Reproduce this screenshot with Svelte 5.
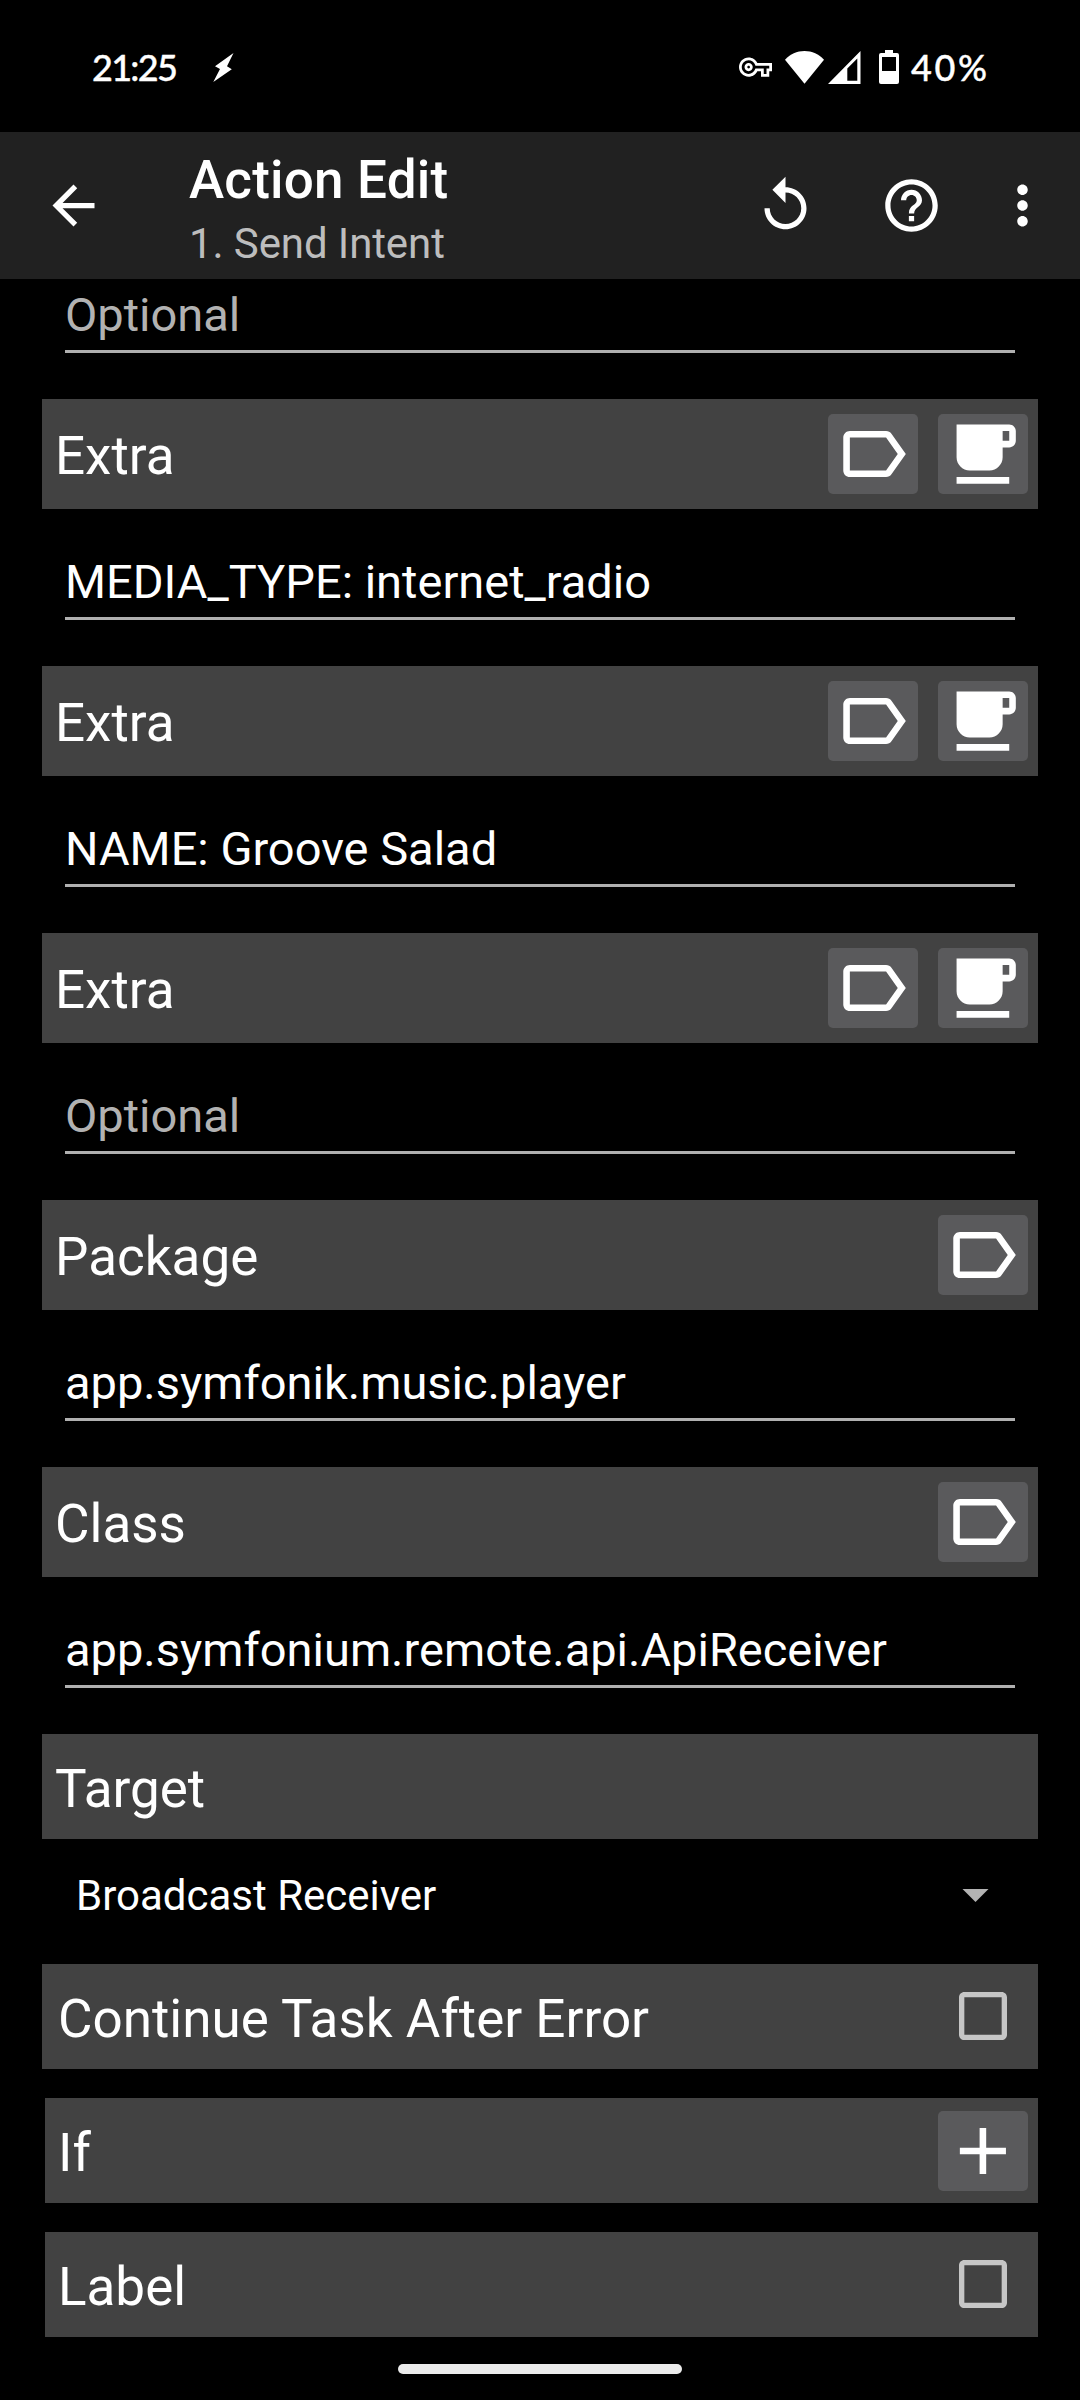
<script lang="ts">
	type Field = { label: string; value: string; coffee?: boolean };

	const fields: Field[] = [
		{ label: 'Extra', value: 'MEDIA_TYPE: internet_radio', coffee: true },
		{ label: 'Extra', value: 'NAME: Groove Salad', coffee: true },
		{ label: 'Extra', value: '', coffee: true },
		{ label: 'Package', value: 'app.symfonik.music.player' },
		{ label: 'Class', value: 'app.symfonium.remote.api.ApiReceiver' }
	];
</script>

{#snippet icon(d: string)}
	<svg class="icon" viewBox="0 0 24 24"><path {d} /></svg>
{/snippet}

{#snippet field(value: string)}
	<div class="field" class:placeholder={!value}>{value || 'Optional'}</div>
{/snippet}

{#snippet checkbox()}
	<svg class="checkbox" viewBox="0 0 24 24"><path d="M19 5v14H5V5h14m0-2H5c-1.1 0-2 .9-2 2v14c0 1.1.9 2 2 2h14c1.1 0 2-.9 2-2V5c0-1.1-.9-2-2-2z" /></svg>
{/snippet}

<div class="screen">
	<div class="status">
		<span class="clock">21:25</span>
		<svg class="bolt" viewBox="0 0 21 29"><path d="M20.5 0 2 13.2 7 16 0.3 29 18.8 16.2 14 13.2z" /></svg>
		<div class="status-right">
			<svg class="key" viewBox="0 5 24 14"><path d="M22 19h-6v-4h-2.68c-1.14 2.42-3.6 4-6.32 4-3.86 0-7-3.14-7-7s3.14-7 7-7c2.72 0 5.17 1.58 6.32 4H24v6h-2v4zm-4-2h2v-4h2v-2H11.94l-.23-.67C11.01 8.34 9.11 7 7 7c-2.76 0-5 2.24-5 5s2.24 5 5 5c2.11 0 4.01-1.34 4.71-3.33l.23-.67H18v4zM7 15c-1.65 0-3-1.35-3-3s1.35-3 3-3 3 1.35 3 3-1.35 3-3 3zm0-4c-.55 0-1 .45-1 1s.45 1 1 1 1-.45 1-1-.45-1-1-1z" /></svg>
			<svg class="wifi" viewBox="0 0 39 33"><path d="M19.5 32.7 0 8.7C5 3 12 0 19.5 0S34 3 39 8.7z" /></svg>
			<svg class="signal" viewBox="0 0 33 33"><path fill-rule="evenodd" d="M32.5 0v33H0zM29.3 7.5 19.3 17.5v12.3h10z" /></svg>
			<svg class="battery" viewBox="0 0 20 34"><path fill-rule="evenodd" d="M6 0h8v3h4a2 2 0 0 1 2 2v27a2 2 0 0 1-2 2H2a2 2 0 0 1-2-2V5a2 2 0 0 1 2-2h4zM3 7v14h14V7z" /></svg>
			<span class="percent">40%</span>
		</div>
	</div>

	<header>
		<button class="back" aria-label="Back">
			{@render icon('M20 11H7.83l5.59-5.59L12 4l-8 8 8 8 1.41-1.41L7.83 13H20v-2z')}
		</button>
		<div class="titles">
			<h1>Action Edit</h1>
			<p>1. Send Intent</p>
		</div>
		<div class="tools">
			<button aria-label="Restore">
				{@render icon('M12 5V1L7 6l5 5V7c3.31 0 6 2.69 6 6s-2.69 6-6 6-6-2.69-6-6H4c0 4.42 3.58 8 8 8s8-3.58 8-8-3.58-8-8-8z')}
			</button>
			<button aria-label="Help">
				{@render icon('M11 18h2v-2h-2v2zm1-16C6.48 2 2 6.48 2 12s4.48 10 10 10 10-4.48 10-10S17.52 2 12 2zm0 18c-4.41 0-8-3.59-8-8s3.59-8 8-8 8 3.59 8 8-3.59 8-8 8zm0-14c-2.21 0-4 1.79-4 4h2c0-1.1.9-2 2-2s2 .9 2 2c0 2-3 1.75-3 5h2c0-2.25 3-2.5 3-5 0-2.21-1.79-4-4-4z')}
			</button>
			<button class="more" aria-label="More options">
				{@render icon('M12 8c1.1 0 2-.9 2-2s-.9-2-2-2-2 .9-2 2 .9 2 2 2zm0 2c-1.1 0-2 .9-2 2s.9 2 2 2 2-.9 2-2-.9-2-2-2zm0 6c-1.1 0-2 .9-2 2s.9 2 2 2 2-.9 2-2-.9-2-2-2z')}
			</button>
		</div>
	</header>

	<main>
		{@render field('')}

		{#each fields as f}
			<div class="bar tall">
				<span class="label">{f.label}</span>
				<button class="chip" aria-label="Variable">
					{@render icon('M17.63 5.84C17.27 5.33 16.67 5 16 5L5 5.01C3.9 5.01 3 5.9 3 7v10c0 1.1.9 1.99 2 1.99L16 19c.67 0 1.27-.33 1.63-.84L22 12l-4.37-6.16zM16 17H5V7h11l3.55 5L16 17z')}
				</button>
				{#if f.coffee}
					<button class="chip" aria-label="Coffee">
						{@render icon('M20 3H4v10c0 2.21 1.79 4 4 4h6c2.21 0 4-1.79 4-4v-3h2c1.11 0 2-.89 2-2V5c0-1.11-.89-2-2-2zm0 5h-2V5h2v3zM4 19h16v2H4z')}
					</button>
				{/if}
			</div>
			{@render field(f.value)}
		{/each}

		<div class="bar"><span class="label">Target</span></div>
		<div class="spinner">
			<span>Broadcast Receiver</span>
			<svg class="caret" viewBox="0 0 27 13"><path d="M.5 0h26l-13 13z" /></svg>
		</div>

		<div class="bar continue">
			<span class="label">Continue Task After Error</span>
			{@render checkbox()}
		</div>
		<div class="bar inset">
			<span class="label">If</span>
			<button class="chip" aria-label="Add condition">
				{@render icon('M19 13h-6v6h-2v-6H5v-2h6V5h2v6h6v2z')}
			</button>
		</div>
		<div class="bar inset">
			<span class="label">Label</span>
			{@render checkbox()}
		</div>
	</main>

	<div class="nav"><span class="handle"></span></div>
</div>

<style>
	:global(body) { background: #000; }
	.screen {
		display: flex;
		flex-direction: column;
		width: 1080px;
		height: 2400px;
		overflow: hidden;
		background: #000;
		color: #fff;
		font-family: Roboto, sans-serif;
	}
	svg { display: block; flex: none; fill: currentColor; }
	button {
		display: flex; align-items: center; justify-content: center;
		flex: none;
		padding: 0;
		border: 0;
		background: none;
		color: inherit;
	}
	.status {
		display: flex;
		align-items: center;
		height: 132px;
		padding: 2px 92px 0 92px;
		box-sizing: border-box;
		font-family: Lato, sans-serif;
		font-size: 36px;
		font-weight: 500;
		line-height: 44px;
		-webkit-text-stroke: 0.4px #fff;
	}
	.clock { width: 121px; letter-spacing: -1.7px; }
	.bolt { width: 21px; height: 29px; }
	.status-right { display: flex; align-items: center; margin-left: auto; }
	.key { width: 33px; height: 20px; margin-right: 13px; }
	.wifi { width: 39px; height: 33px; margin-right: 4px; }
	.signal { width: 33px; height: 33px; margin-right: 18px; }
	.battery { width: 20px; height: 34px; margin-right: 12px; }
	.percent { width: 77px; letter-spacing: 2.6px; white-space: nowrap; }
	header {
		display: flex;
		align-items: center;
		height: 147px;
		padding: 0 26px 0 42px;
		box-sizing: border-box;
		background: #212121;
	}
	header .icon { width: 63px; height: 63px; }
	.titles { margin-left: 84px; padding-top: 7px; }
	h1 {
		margin: 0;
		font-size: 53px;
		font-weight: 500;
		line-height: 62px;
		letter-spacing: 0.2px;
	}
	.titles p {
		margin: 8px 0 0;
		color: #bdbdbd;
		font-size: 42px;
		line-height: 50px;
		letter-spacing: -0.1px;
	}
	.tools { display: flex; gap: 63px; margin-left: auto; }
	.more { margin-left: -15px; }
	main { padding: 8px 42px 0; }
	.bar {
		display: flex;
		align-items: center;
		gap: 20px;
		height: 105px;
		padding: 0 10px 0 13px;
		box-sizing: border-box;
		background: #424242;
	}
	.bar.tall { height: 110px; }
	.label {
		flex: 1;
		padding-top: 5px;
		font-size: 53px;
		line-height: 62px;
	}
	.tall .label { padding-top: 3px; }
	.bar.continue { padding-left: 16px; }
	.bar.inset { margin: 29px 0 0 3px; }
	.chip {
		width: 90px;
		height: 80px;
		border-radius: 5px;
		background: #5a5a5c;
	}
	.chip .icon {
		width: 79px;
		height: 79px;
		margin: 0 1px 1px 0;
		transform: translate(0.4px, 0.5px);
	}
	.field {
		margin: 0 23px 46px;
		padding-bottom: 7px;
		border-bottom: 3px solid #b0b0b0;
		font-size: 47px;
		line-height: 56px;
	}
	.bar + .field { margin-top: 45px; }
	.placeholder { color: #b2b2b2; }
	.spinner {
		display: flex;
		justify-content: space-between;
		align-items: center;
		height: 113px;
		margin-bottom: 12px;
		padding: 0 49px 0 34px;
		font-size: 42px;
		line-height: 50px;
	}
	.caret { width: 27px; height: 13px; color: #b3b3b3; }
	.checkbox {
		width: 64px;
		height: 64px;
		margin: 0 13px 1px 0;
		color: #c6c6c6;
	}
	.nav { display: flex; justify-content: center; padding-top: 27px; }
	.handle { width: 284px; height: 10px; border-radius: 5px; background: #ebebeb; }
</style>
